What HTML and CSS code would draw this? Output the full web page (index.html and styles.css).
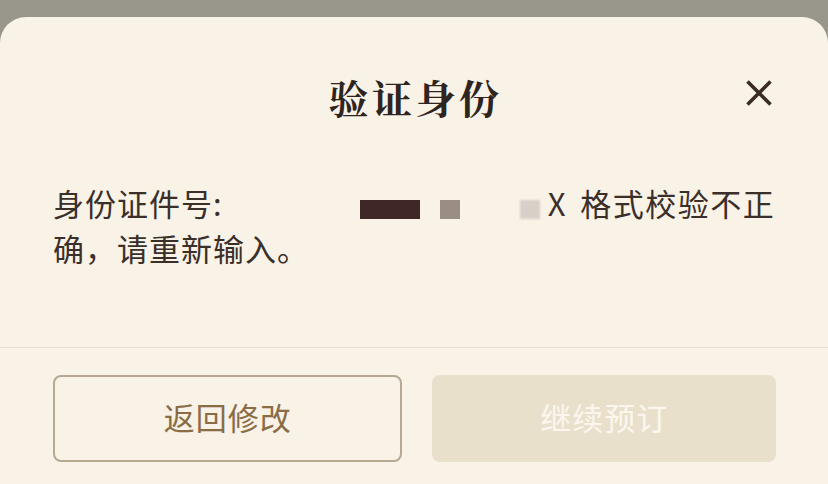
FILE: index.html
```html
<!DOCTYPE html>
<html lang="zh-CN">
<head>
<meta charset="utf-8">
<link rel="stylesheet" href="styles.css">
</head>
<body>
<div class="page">
  <div class="sheet">
    <div class="header">
      <div></div>
      <h1 class="title">验证身份</h1>
      <button class="close" aria-label="关闭">
        <svg width="28" height="28" viewBox="0 0 28 28"><path d="M2.5 2.5 L25.5 25.5 M25.5 2.5 L2.5 25.5" stroke="#3a2b25" stroke-width="3.6" stroke-linecap="butt" fill="none"/></svg>
      </button>
    </div>
    <div class="message">
      <p class="line">身份证件号:<span class="mask m1"></span><span class="mask m2"></span><span class="mask m3"></span><span class="tail">X 格式校验不正</span></p>
      <p class="line">确，请重新输入。</p>
    </div>
    <div class="divider"></div>
    <div class="actions">
      <button class="btn back">返回修改</button>
      <button class="btn next">继续预订</button>
    </div>
  </div>
</div>
</body>
</html>
```
FILE: styles.css
```css
html, body {
  margin: 0;
  padding: 0;
}
body {
  font-family: "Noto Sans CJK SC", "Noto Sans", sans-serif;
  background: #99968b;
}
.page {
  width: 828px;
  height: 484px;
  padding-top: 17px;
  box-sizing: border-box;
  overflow: hidden;
}
.sheet {
  background: #f8f2e7;
  border-radius: 26px 26px 0 0;
  height: 467px;
}
.header {
  display: grid;
  grid-template-columns: 1fr auto 1fr;
  align-items: center;
  padding-top: 52px;
  height: 56px;
}
.title {
  margin: 0;
  padding-left: 3px;
  font-family: "Noto Serif CJK SC", "Noto Sans CJK SC", serif;
  font-size: 40px;
  font-weight: 700;
  line-height: 56px;
  color: #2e2420;
  letter-spacing: 3.5px;
}
.close {
  justify-self: end;
  margin-right: 55px;
  margin-bottom: 8px;
  background: none;
  border: 0;
  padding: 0;
  width: 28px;
  height: 28px;
  display: flex;
}
.message {
  margin-top: 55px;
  padding: 0 53px 77px;
}
.line {
  margin: 0;
  font-size: 31px;
  letter-spacing: 1px;
  line-height: 45px;
  color: #3a2f29;
  white-space: nowrap;
}
.mask {
  display: inline-block;
  height: 19px;
  vertical-align: -3px;
}
.m1 {
  width: 60px;
  margin-left: 137px;
  background: #3f2627;
}
.m2 {
  width: 20px;
  margin-left: 20px;
  background: #9a8d86;
}
.m3 {
  width: 20px;
  margin-left: 60px;
  background: #d6d0c9;
  filter: blur(1px);
}
.tail {
  margin-left: 8px;
  word-spacing: 5px;
  letter-spacing: 1.5px;
}
.divider {
  height: 1px;
  background: #e8dfd2;
}
.actions {
  display: flex;
  gap: 30px;
  padding: 27px 52px 0 53px;
}
.btn {
  flex: 1;
  height: 87px;
  border-radius: 8px;
  font-family: "Noto Sans CJK SC", sans-serif;
  font-size: 31px;
  letter-spacing: 1px;
  display: flex;
  align-items: center;
  justify-content: center;
  padding: 0 0 5px 1px;
}
.back {
  background: #f8f2e7;
  border: 2px solid #b6a893;
  color: #8a6c45;
}
.next {
  background: #e9e0cc;
  border: 0;
  color: #fbf7ef;
}
```
